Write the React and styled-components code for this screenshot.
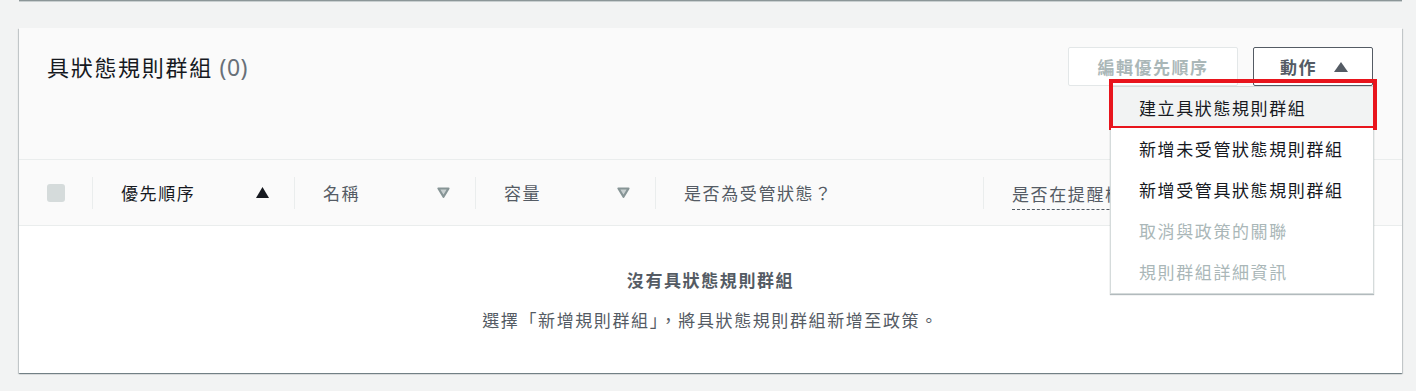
import React from "react";
import styled, { createGlobalStyle } from "styled-components";

const GlobalStyle = createGlobalStyle`
  html, body {
    margin: 0;
    padding: 0;
    background: #f2f3f3;
  }
  body {
    font-family: "Noto Sans CJK TC", "Noto Sans", sans-serif;
    color: #16191f;
  }
`;

const Page = styled.div`
  width: 1416px;
  height: 391px;
  overflow: hidden;
  box-sizing: border-box;
  padding: 0 14px 0 19px;
`;

const PrevCardEdge = styled.div`
  height: 1px;
  background: #8c9698;
  box-shadow: 0 1px 0 #c9cfd0;
  margin-bottom: 27px;
`;

const Card = styled.section`
  background: #fff;
  box-shadow: 0 1px 1px 0 rgba(0, 28, 36, 0.35), 1px 1px 1px 0 rgba(0, 28, 36, 0.15),
    -1px 1px 1px 0 rgba(0, 28, 36, 0.15);
`;

const Header = styled.header`
  height: 132px;
  box-sizing: border-box;
  padding: 19px 29px 0 28px;
  background: #fafafa;
  border-bottom: 1px solid #eaeded;
  display: flex;
  justify-content: space-between;
  align-items: flex-start;
`;

const Title = styled.h2`
  margin: 0;
  font-size: 22px;
  font-weight: 400;
  letter-spacing: 1.7px;
  line-height: 38px;
  color: #16191f;
`;

const Count = styled.span`
  font-family: "Noto Sans", sans-serif;
  font-size: 23px;
  letter-spacing: 0.5px;
  color: #687078;
`;

const Actions = styled.div`
  position: relative;
  display: flex;
  gap: 15px;
`;

const Button = styled.button`
  height: 39px;
  box-sizing: border-box;
  width: ${(p) => p.$width}px;
  border-radius: 2px;
  background: #fff;
  border: 1px solid ${(p) => (p.disabled ? "#e3e7e8" : "#545b64")};
  color: ${(p) => (p.disabled ? "#aab7b8" : "#545b64")};
  font-family: inherit;
  font-size: 17px;
  font-weight: 700;
  letter-spacing: 1.5px;
  display: flex;
  align-items: center;
  justify-content: ${(p) => (p.disabled ? "center" : "space-between")};
  padding: ${(p) => (p.disabled ? "0" : "0 24px 0 26px")};
  cursor: pointer;
`;

const Menu = styled.ul`
  position: absolute;
  top: 39px;
  right: -1px;
  width: 262px;
  margin: 0;
  padding: 0 0 1px;
  list-style: none;
  background: #fff;
  border: 1px solid #d5dbdb;
  box-shadow: 0 1px 1px 0 rgba(0, 28, 36, 0.3);
  z-index: 5;
`;

const MenuItem = styled.li`
  position: relative;
  height: 41px;
  line-height: 41px;
  display: flex;
  align-items: center;
  padding-left: 28px;
  font-size: 17px;
  letter-spacing: 1.6px;
  color: ${(p) => (p.$disabled ? "#aab7b8" : "#16191f")};
  background: ${(p) => (p.$active ? "#f2f3f3" : "#fff")};
`;

const Highlight = styled.span`
  position: absolute;
  top: -8px;
  left: -2px;
  right: -4px;
  bottom: -2px;
  border: 4px solid #e8141c;
  pointer-events: none;
`;

const HeadRow = styled.div`
  height: 66px;
  box-sizing: border-box;
  display: grid;
  grid-template-columns: 73px 202px 181px 180px 328px 1fr;
  align-items: center;
  background: #fafafa;
  border-bottom: 1px solid #eaeded;
  overflow: hidden;
`;

const CheckCell = styled.div`
  padding-left: 28px;
  display: flex;
  align-items: center;
`;

const Checkbox = styled.span`
  width: 18px;
  height: 18px;
  border-radius: 3px;
  background: #d5dbdb;
`;

const ColumnHead = styled.div`
  height: 32px;
  border-left: 1px solid #eaeded;
  display: flex;
  align-items: center;
  justify-content: space-between;
  padding: 0 25px 0 28px;
  font-size: 17px;
  letter-spacing: 1.6px;
  white-space: nowrap;
  color: ${(p) => (p.$sorted ? "#16191f" : "#545b64")};
`;

const Underlined = styled.span`
  border-bottom: 1px dashed #545b64;
  padding-bottom: 3px;
  margin-top: 6px;
`;

const Empty = styled.div`
  height: 147px;
  box-sizing: border-box;
  padding-top: 41px;
  display: flex;
  flex-direction: column;
  align-items: center;
  color: #545b64;
  font-size: 17px;
  letter-spacing: 1.6px;
  line-height: 26px;
`;

const EmptyTitle = styled.div`
  font-weight: 700;
`;

const EmptyText = styled.div`
  margin-top: 14px;
`;

const CaretUp = ({ color = "#545b64" }) => (
  <svg width="14" height="10" viewBox="0 0 14 10">
    <polygon points="7,0 14,10 0,10" fill={color} />
  </svg>
);

const SortAsc = () => (
  <svg width="13" height="11" viewBox="0 0 13 11">
    <polygon points="6.5,0 13,11 0,11" fill="#16191f" />
  </svg>
);

const SortNone = () => (
  <svg width="13" height="11" viewBox="0 0 13 11">
    <polygon
      points="1.5,1.5 11.5,1.5 6.5,9.8"
      fill="#c9d0d1"
      stroke="#879596"
      strokeWidth="2.2"
      strokeLinejoin="round"
    />
  </svg>
);

const menu = [
  { label: "建立具狀態規則群組", active: true },
  { label: "新增未受管狀態規則群組" },
  { label: "新增受管具狀態規則群組" },
  { label: "取消與政策的關聯", disabled: true },
  { label: "規則群組詳細資訊", disabled: true },
];

export default function App() {
  return (
    <>
      <GlobalStyle />
      <Page>
        <PrevCardEdge />
        <Card>
          <Header>
            <Title>
              具狀態規則群組 <Count>(0)</Count>
            </Title>
            <Actions>
              <Button disabled $width={170}>
                編輯優先順序
              </Button>
              <Button $width={120}>
                動作
                <CaretUp />
              </Button>
              <Menu>
                {menu.map((m) => (
                  <MenuItem key={m.label} $active={m.active} $disabled={m.disabled}>
                    {m.label}
                    {m.active && <Highlight />}
                  </MenuItem>
                ))}
              </Menu>
            </Actions>
          </Header>
          <HeadRow>
            <CheckCell>
              <Checkbox />
            </CheckCell>
            <ColumnHead $sorted>
              優先順序
              <SortAsc />
            </ColumnHead>
            <ColumnHead>
              名稱
              <SortNone />
            </ColumnHead>
            <ColumnHead>
              容量
              <SortNone />
            </ColumnHead>
            <ColumnHead>是否為受管狀態？</ColumnHead>
            <ColumnHead>
              <Underlined>是否在提醒模式下？</Underlined>
            </ColumnHead>
          </HeadRow>
          <Empty>
            <EmptyTitle>沒有具狀態規則群組</EmptyTitle>
            <EmptyText>選擇「新增規則群組」，將具狀態規則群組新增至政策。</EmptyText>
          </Empty>
        </Card>
      </Page>
    </>
  );
}
